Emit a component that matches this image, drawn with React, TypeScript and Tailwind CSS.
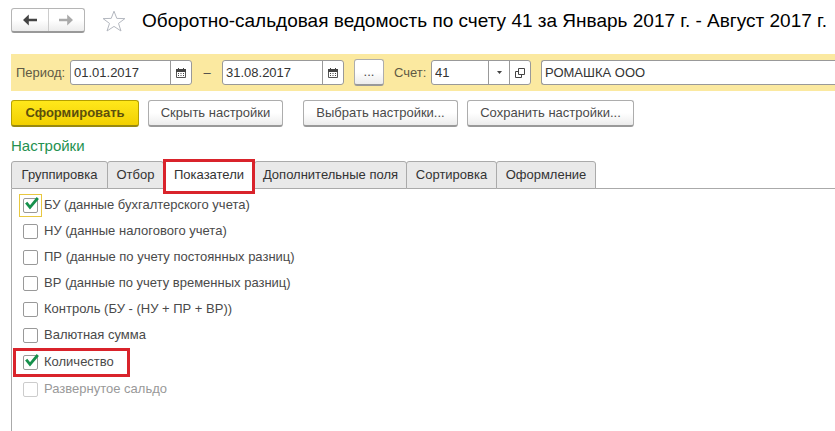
import { useState } from 'react';
import type { ReactNode } from 'react';

const tabs = [
  { id: 'group', label: 'Группировка', width: 'w-[97px]' },
  { id: 'filter', label: 'Отбор', width: 'w-[57px]' },
  { id: 'metrics', label: 'Показатели', width: 'w-[92px]' },
  { id: 'extra', label: 'Дополнительные поля', width: 'w-[153px]' },
  { id: 'sort', label: 'Сортировка', width: 'w-[91px]' },
  { id: 'style', label: 'Оформление', width: 'w-[100px]' },
];

const options = [
  { id: 'bu', label: 'БУ (данные бухгалтерского учета)', checked: true, focused: true },
  { id: 'nu', label: 'НУ (данные налогового учета)' },
  { id: 'pr', label: 'ПР (данные по учету постоянных разниц)' },
  { id: 'vr', label: 'ВР (данные по учету временных разниц)' },
  { id: 'control', label: 'Контроль (БУ - (НУ + ПР + ВР))' },
  { id: 'currency', label: 'Валютная сумма' },
  { id: 'quantity', label: 'Количество', checked: true, marked: true },
  { id: 'expanded', label: 'Развернутое сальдо', disabled: true },
];

function ArrowIcon({ className }: { className: string }) {
  return (
    <svg viewBox="0 0 14 12" className={className} fill="currentColor">
      <path d="M0 6 L5.8 0.6 V4.7 H14 V7.3 H5.8 V11.4 Z" />
    </svg>
  );
}

function CalendarIcon() {
  return (
    <svg viewBox="0 0 10 10" className="h-[10px] w-[10px]">
      <path d="M0.5 1.5 H9.5 V9.5 H0.5 Z" fill="#fff" stroke="#555" />
      <path d="M0 1 H10 V4 H0 Z M2 0 H3 V1 H2 Z M7 0 H8 V1 H7 Z" fill="#444" />
      <path d="M2 5.5 H9 M2 7.5 H9" stroke="#444" strokeDasharray="1 1.5" />
    </svg>
  );
}

function DateField({ label, value }: { label: string; value: string }) {
  return (
    <div className="flex h-[25px] w-[122px] shrink-0 overflow-hidden rounded-[3px] border border-[#999] bg-white">
      <input aria-label={label} defaultValue={value} className="min-w-0 flex-1 px-[3px] text-[#333] outline-none" />
      <button aria-label="Выбрать дату" className="flex w-[21px] items-center justify-center border-l border-[#999]">
        <CalendarIcon />
      </button>
    </div>
  );
}

function PushButton({ className, children }: { className: string; children: ReactNode }) {
  return (
    <button
      className={`h-[27px] shrink-0 rounded-[3px] border border-b-2 border-[#adadad] border-b-[#999] bg-linear-to-b from-white from-50% to-[#ececec] whitespace-nowrap text-[#4a4a4a] ${className}`}
    >
      {children}
    </button>
  );
}

export default function App() {
  const [active, setActive] = useState('metrics');

  return (
    <div className="flex min-h-screen flex-col overflow-hidden bg-white pl-[11px] font-['Liberation_Sans',Arial,sans-serif] text-[13px] leading-4 text-[#4a4a4a]">
      <header className="flex h-[54px] items-start pt-2">
        <div className="flex h-[25px] w-[74px] shrink-0 rounded-[3px] border border-b-2 border-[#b5b5b5] border-b-[#999] bg-linear-to-b from-white from-50% to-[#ececec]">
          <button aria-label="Назад" className="flex flex-1 items-center justify-center border-r border-[#ccc] text-[#444]">
            <ArrowIcon className="h-3 w-[14px]" />
          </button>
          <button aria-label="Вперед" className="flex flex-1 items-center justify-center text-[#aaa]">
            <ArrowIcon className="h-3 w-[14px] -scale-x-100" />
          </button>
        </div>
        <button aria-label="В избранное" className="ml-[17px] shrink-0 pt-[2px]">
          <svg viewBox="0 0 24 22" className="h-[22px] w-6" fill="none" stroke="#b4b8c0">
            <path d="M12 1.2 L14.8 8.4 L22.9 8.6 L16.5 13.4 L19 21 L12 16.4 L5 21 L7.5 13.4 L1.1 8.6 L9.2 8.4 Z" />
          </svg>
        </button>
        <h1 className="ml-4 text-[19px] leading-[26px] whitespace-nowrap text-black">
          Оборотно-сальдовая ведомость по счету 41 за Январь 2017 г. - Август 2017 г.
        </h1>
      </header>

      <div className="flex h-[37px] items-center bg-[#fbe9a0] pl-[5px]">
        <span className="w-[54px] shrink-0 text-[#5f5a45]">Период:</span>
        <DateField label="Начало периода" value="01.01.2017" />
        <span className="w-[30px] shrink-0 text-center">–</span>
        <DateField label="Конец периода" value="31.08.2017" />
        <PushButton className="ml-[10px] w-[30px]">...</PushButton>
        <label htmlFor="account" className="ml-[10px] w-[37px] shrink-0 text-[#5f5a45]">
          Счет:
        </label>
        <div className="flex h-[25px] w-[100px] shrink-0 overflow-hidden rounded-[3px] border border-[#999] bg-white">
          <input id="account" defaultValue="41" className="min-w-0 flex-1 px-[3px] text-[#333] outline-none" />
          <button aria-label="Открыть список" className="flex w-[21px] items-center justify-center border-l border-[#999]">
            <svg viewBox="0 0 5 3" className="h-[3px] w-[5px]">
              <path d="M0 0 H5 L2.5 3 Z" fill="#444" />
            </svg>
          </button>
          <button aria-label="Открыть счет" className="flex w-[21px] items-center justify-center border-l border-[#999]">
            <svg viewBox="0 0 10 10" className="h-[10px] w-[10px]" fill="none" stroke="#444">
              <path d="M3.5 0.5 H9.5 V6.5 H3.5 Z M3.5 3.5 H0.5 V9.5 H6.5 V6.5" />
            </svg>
          </button>
        </div>
        <input
          aria-label="Организация"
          defaultValue="РОМАШКА ООО"
          className="ml-[10px] h-[25px] min-w-0 flex-1 rounded-l-[3px] border border-r-0 border-[#999] bg-white px-[3px] text-[#333] outline-none"
        />
      </div>

      <div className="mt-[9px] flex">
        <button className="h-[27px] w-32 shrink-0 rounded-[3px] border border-b-2 border-[#b5a000] border-b-[#998a10] bg-linear-to-b from-[#ffe81a] to-[#f2d000] font-bold text-[#5c4f0c]">
          Сформировать
        </button>
        <PushButton className="ml-[9px] w-[135px]">Скрыть настройки</PushButton>
        <PushButton className="ml-5 w-[155px]">Выбрать настройки...</PushButton>
        <PushButton className="ml-[9px] w-[167px]">Сохранить настройки...</PushButton>
      </div>

      <h2 className="mt-[9px] text-[15px] leading-5 text-[#249150]">Настройки</h2>

      <div role="tablist" className="mt-[5px] flex">
        {tabs.map((tab) => (
          <button
            key={tab.id}
            role="tab"
            aria-selected={tab.id === active}
            onClick={() => setActive(tab.id)}
            className={`relative -mr-px h-7 shrink-0 rounded-t-[3px] border border-[#aaa] text-center whitespace-nowrap text-[#333] ${tab.width} ${
              tab.id === active ? 'border-b-white bg-white' : 'bg-[#e9e9e9]'
            }`}
          >
            {tab.label}
            {tab.id === 'metrics' && (
              <span className="pointer-events-none absolute -inset-x-px -top-[3px] -bottom-[6px] z-10 border-3 border-[#d9232b]" />
            )}
          </button>
        ))}
        <div className="flex-1 border-b border-[#aaa]" />
      </div>

      <div role="tabpanel" className="flex flex-1 flex-col border-l border-[#aaa] pt-[3px] pl-[11px]">
        {options.map((option) => (
          <label
            key={option.id}
            className={`relative flex items-center gap-[6px] self-start ${option.marked ? 'h-7' : 'h-[26px]'} ${
              option.disabled ? 'text-[#999]' : ''
            }`}
          >
            <span className="relative flex">
              <input
                type="checkbox"
                defaultChecked={option.checked}
                disabled={option.disabled}
                className="peer h-[15px] w-[15px] appearance-none rounded-[2px] border border-[#999] bg-white outline-none disabled:border-[#ccc]"
              />
              <svg
                viewBox="0 0 14 13"
                className="pointer-events-none absolute -top-px left-[2px] hidden h-[13px] w-[14px] peer-checked:block"
                fill="none"
                stroke="#16904c"
              >
                <path d="M1.2 5.6 L5 10.4 L12.8 1" strokeWidth="2.8" />
              </svg>
              {option.focused && (
                <span className="pointer-events-none absolute -inset-1 border border-[#e8c840]" />
              )}
            </span>
            {option.label}
            {option.marked && (
              <span className="pointer-events-none absolute top-0 -right-4 -bottom-px -left-[10px] border-3 border-[#d9232b]" />
            )}
          </label>
        ))}
      </div>
    </div>
  );
}
